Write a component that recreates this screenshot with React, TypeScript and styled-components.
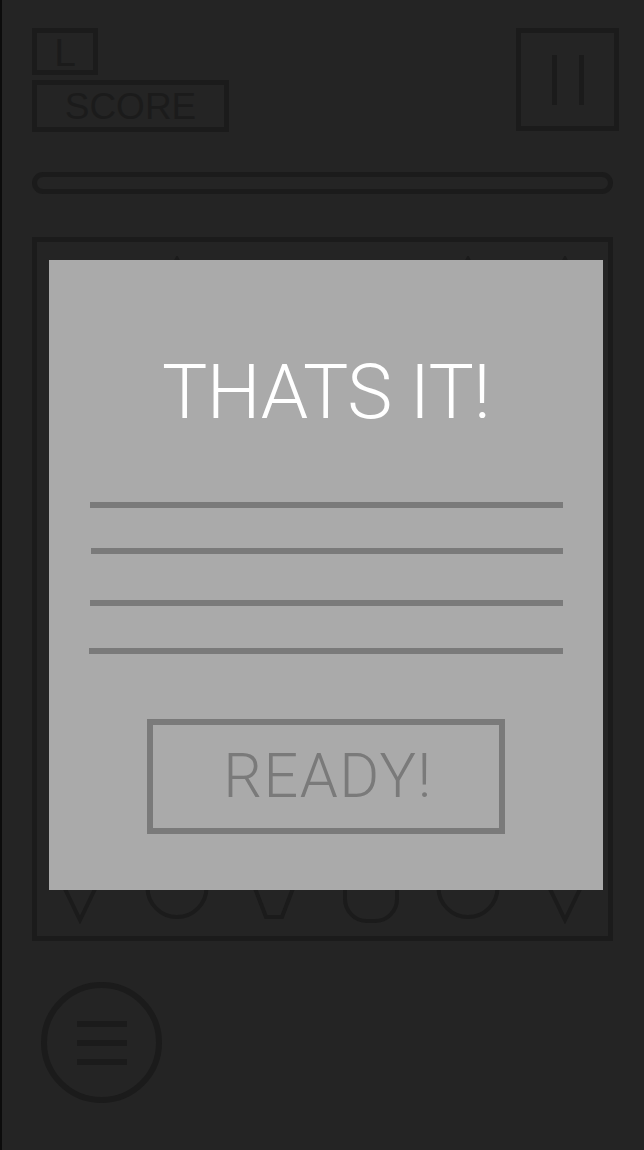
import React from 'react';
import styled, { createGlobalStyle } from 'styled-components';

const GlobalStyle = createGlobalStyle`
    html, body {
        margin: 0;
        padding: 0;
        background: #242424;
    }
`;

const INK = '#1b1b1b';
const MUTED = '#7a7a7a';

type Kind = 'triDown' | 'triUp' | 'circle' | 'cup' | 'pill' | 'none';

const bottomRow: Kind[] = ['triDown', 'circle', 'cup', 'pill', 'circle', 'triDown'];
const topRow: Kind[] = ['none', 'triUp', 'none', 'none', 'triUp', 'triUp'];

const Piece = ({ kind }: { kind: Kind }) => {
    return (
        <PieceSvg viewBox="0 0 66 66" width="66" height="66">
            {kind === 'triDown' && <polygon points="5,4 61,4 33,62" />}
            {kind === 'triUp' && <polygon points="33,3 61,60 5,60" />}
            {kind === 'circle' && <circle cx="33" cy="29.5" r="29.5" />}
            {kind === 'cup' && <polygon points="4,4 62,4 41,59 25,59" />}
            {kind === 'pill' && <rect x="7" y="4" width="52" height="59" rx="22" />}
        </PieceSvg>
    );
};

const App = () => {
    return (
        <Page>
            <GlobalStyle />
            <Header>
                <Stats>
                    <LevelBox>L</LevelBox>
                    <ScoreBox>SCORE</ScoreBox>
                </Stats>
                <PauseButton>
                    <PauseBar />
                    <PauseBar />
                </PauseButton>
            </Header>

            <Progress />

            <Board>
                <Grid>
                    {topRow.map((k, i) => (
                        <Cell key={'t' + i}>
                            <Piece kind={k} />
                        </Cell>
                    ))}
                    {Array.from({ length: 24 }).map((_, i) => (
                        <Cell key={'m' + i} />
                    ))}
                    {bottomRow.map((k, i) => (
                        <Cell key={'b' + i}>
                            <Piece kind={k} />
                        </Cell>
                    ))}
                </Grid>

                <Modal>
                    <Title>THATS IT!</Title>
                    <Rule $width={473} $top={72} />
                    <Rule $width={472} $top={40} />
                    <Rule $width={473} $top={46} />
                    <Rule $width={474} $top={42} />
                    <ReadyButton>READY!</ReadyButton>
                </Modal>
            </Board>

            <MenuButton>
                <MenuLine />
                <MenuLine />
                <MenuLine />
            </MenuButton>
        </Page>
    );
};
export default App;

const Page = styled.div`
    width: 644px;
    height: 1150px;
    box-sizing: border-box;
    border-left: 2px solid #0c0c0c;
    padding: 28px 25px 0 30px;
    display: flex;
    flex-direction: column;
    font-family: 'Liberation Sans', Arial, sans-serif;
    overflow: hidden;
`;

const Header = styled.div`
    display: flex;
    justify-content: space-between;
    align-items: flex-start;
`;

const Stats = styled.div`
    display: flex;
    flex-direction: column;
    gap: 5px;
`;

const OutlineBox = styled.div`
    box-sizing: border-box;
    border: 5px solid ${INK};
    color: ${INK};
    display: flex;
    align-items: center;
    justify-content: center;
    line-height: 1;
`;

const LevelBox = styled(OutlineBox)`
    width: 66px;
    height: 47px;
    font-size: 39px;
    padding-top: 2px;
`;

const ScoreBox = styled(OutlineBox)`
    width: 197px;
    height: 52px;
    font-size: 37px;
    padding-top: 1px;
`;

const PauseButton = styled(OutlineBox)`
    width: 103px;
    height: 103px;
    gap: 22px;
`;

const PauseBar = styled.span`
    width: 5px;
    height: 50px;
    background: ${INK};
`;

const Progress = styled.div`
    box-sizing: border-box;
    margin: 40px 6px 0 0;
    height: 22px;
    border: 5px solid ${INK};
    border-radius: 11px;
`;

const Board = styled.div`
    position: relative;
    box-sizing: border-box;
    margin: 43px 6px 0 0;
    height: 704px;
    border: 5px solid ${INK};
    padding: 14px 0 12px;
`;

const Grid = styled.div`
    height: 100%;
    display: grid;
    grid-template-columns: repeat(6, 97px);
    grid-template-rows: repeat(5, 66px);
    justify-content: center;
    align-content: space-between;
`;

const Cell = styled.div`
    display: flex;
    justify-content: center;
`;

const PieceSvg = styled.svg`
    fill: none;
    stroke: ${INK};
    stroke-width: 4;
    stroke-linejoin: miter;
`;

const Modal = styled.div`
    position: absolute;
    top: 18px;
    left: 12px;
    width: 554px;
    height: 630px;
    background: #aaaaaa;
    display: flex;
    flex-direction: column;
    align-items: center;
`;

const Title = styled.h1`
    margin: 94px 0 0;
    font-family: Roboto, 'Liberation Sans', sans-serif;
    font-weight: 300;
    font-size: 76px;
    line-height: 1;
    color: #ffffff;
    letter-spacing: -0.5px;
`;

const Rule = styled.div<{ $width: number; $top: number }>`
    align-self: flex-end;
    margin: ${(p) => p.$top}px 40px 0 0;
    width: ${(p) => p.$width}px;
    height: 6px;
    background: ${MUTED};
`;

const ReadyButton = styled.div`
    box-sizing: border-box;
    margin-top: 65px;
    width: 358px;
    height: 115px;
    border: 6px solid ${MUTED};
    display: flex;
    align-items: center;
    justify-content: center;
    padding-left: 4px;
    font-family: Roboto, 'Liberation Sans', sans-serif;
    font-weight: 300;
    font-size: 61px;
    line-height: 1;
    color: ${MUTED};
    letter-spacing: 1.5px;
`;

const MenuButton = styled.div`
    box-sizing: border-box;
    margin: 41px 0 0 9px;
    width: 121px;
    height: 121px;
    border: 6px solid ${INK};
    border-radius: 50%;
    display: flex;
    flex-direction: column;
    align-items: center;
    justify-content: center;
    gap: 13px;
`;

const MenuLine = styled.span`
    width: 50px;
    height: 6px;
    background: ${INK};
`;
